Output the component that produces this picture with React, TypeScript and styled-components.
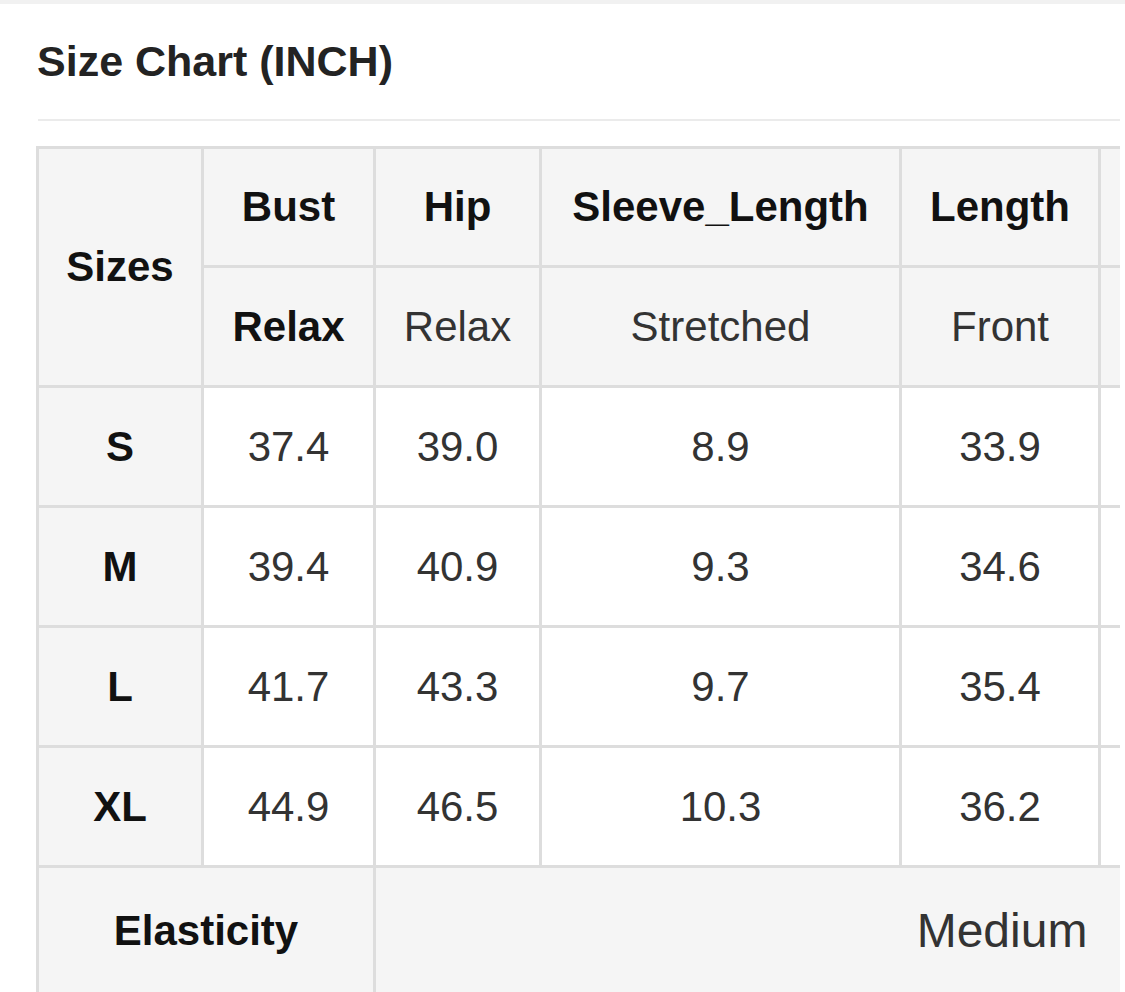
import React from "react";
import styled, { createGlobalStyle } from "styled-components";

const GlobalStyle = createGlobalStyle`
  html, body {
    margin: 0;
    padding: 0;
    background: #ffffff;
    font-family: "Liberation Sans", Arial, Helvetica, sans-serif;
  }
`;

const TopStrip = styled.div`
  height: 4px;
  background: #f1f1f1;
`;

const Page = styled.div`
  padding-left: 36px;
  width: 1084px;
`;

const Title = styled.h2`
  margin: 0;
  padding: 36px 0 0 1px;
  font-size: 43px;
  line-height: 43px;
  font-weight: 700;
  color: #232323;
`;

const Divider = styled.div`
  margin: 36px 0 0 2px;
  height: 2px;
  background: #ebebeb;
`;

const TableWrap = styled.div`
  margin-top: 25px;
  overflow: hidden;
`;

const Table = styled.table`
  border-collapse: separate;
  border-spacing: 0;
  table-layout: fixed;
  width: 1595px;
  border-left: 3px solid #dddddd;
  border-top: 3px solid #dddddd;
`;

const Row = styled.tr<{ $h: number }>`
  height: ${(p) => p.$h}px;
`;

const Cell = styled.td<{ $head?: boolean; $bold?: boolean; $w?: number; $big?: boolean }>`
  box-sizing: border-box;
  ${(p) => (p.$w ? `width: ${p.$w}px;` : "")}
  padding: 0 4px;
  border-right: 3px solid #dddddd;
  border-bottom: 3px solid #dddddd;
  background: ${(p) => (p.$head ? "#f5f5f5" : "#ffffff")};
  color: ${(p) => (p.$bold ? "#111111" : "#333333")};
  font-weight: ${(p) => (p.$bold ? 700 : 400)};
  font-size: ${(p) => (p.$big ? 48 : 42)}px;
  text-align: center;
  vertical-align: middle;
  white-space: nowrap;
`;

const rows = [
  { size: "S", vals: ["37.4", "39.0", "8.9", "33.9"] },
  { size: "M", vals: ["39.4", "40.9", "9.3", "34.6"] },
  { size: "L", vals: ["41.7", "43.3", "9.7", "35.4"] },
  { size: "XL", vals: ["44.9", "46.5", "10.3", "36.2"] },
];

export default function App() {
  return (
    <>
      <GlobalStyle />
      <TopStrip />
      <Page>
        <Title>Size Chart (INCH)</Title>
        <Divider />
        <TableWrap>
          <Table>
            <tbody>
              <Row $h={119}>
                <Cell $head $bold $w={165} rowSpan={2}>Sizes</Cell>
                <Cell $head $bold $w={172}>Bust</Cell>
                <Cell $head $bold $w={166}>Hip</Cell>
                <Cell $head $bold $w={360}>Sleeve_Length</Cell>
                <Cell $head $bold $w={199}>Length</Cell>
                <Cell $head $w={530}></Cell>
              </Row>
              <Row $h={120}>
                <Cell $head $bold>Relax</Cell>
                <Cell $head>Relax</Cell>
                <Cell $head>Stretched</Cell>
                <Cell $head>Front</Cell>
                <Cell $head></Cell>
              </Row>
              {rows.map((r) => (
                <Row $h={120} key={r.size}>
                  <Cell $head $bold>{r.size}</Cell>
                  {r.vals.map((v, i) => (
                    <Cell key={i}>{v}</Cell>
                  ))}
                  <Cell></Cell>
                </Row>
              ))}
              <Row $h={128}>
                <Cell $head $bold colSpan={2}>Elasticity</Cell>
                <Cell $head $big colSpan={4}>Medium</Cell>
              </Row>
            </tbody>
          </Table>
        </TableWrap>
      </Page>
    </>
  );
}
